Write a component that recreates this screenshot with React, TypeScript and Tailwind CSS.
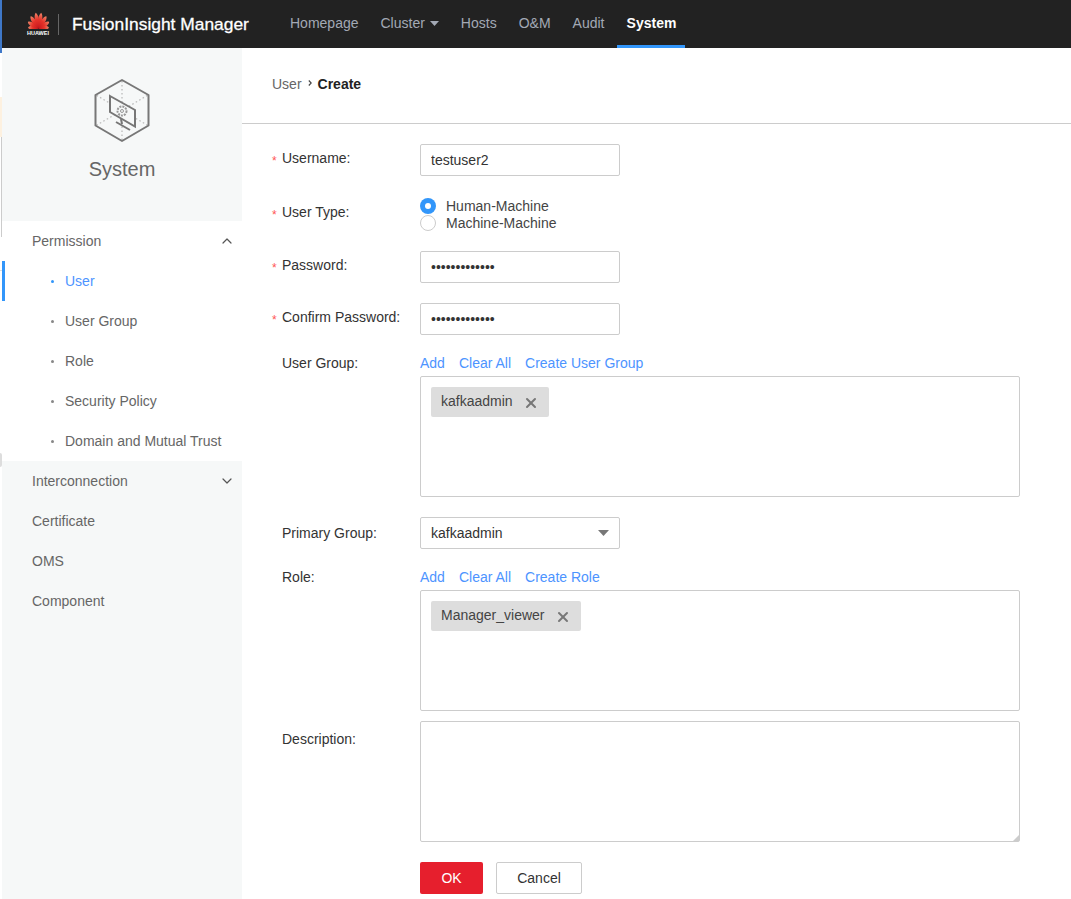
import React from "react";
import { ChevronDown, ChevronUp, X } from "lucide-react";

const navItems = ["Homepage", "Cluster", "Hosts", "O&M", "Audit"];
const menuItems = ["User", "User Group", "Role", "Security Policy", "Domain and Mutual Trust"];

// angle and length of each logo petal, left to right
const petals = [
  [-84, 10.5],
  [-58, 12.5],
  [-33, 14.5],
  [-10, 16],
  [10, 16],
  [33, 14.5],
  [58, 12.5],
  [84, 10.5],
];

function HuaweiLogo() {
  return (
    <div className="flex w-[24px] flex-col items-center">
      <svg width="23" height="17" viewBox="0 0 23 17">
        <defs>
          <linearGradient id="petal" x1="0" y1="0" x2="0" y2="1">
            <stop offset="0" stopColor="#f0876a" />
            <stop offset="0.45" stopColor="#e5332a" />
            <stop offset="1" stopColor="#c4161c" />
          </linearGradient>
        </defs>
        {petals.map(([a, l]) => (
          <path
            key={a}
            d={`M11.5 16.5 C8.6 ${16.5 - l * 0.45} 9 ${16.5 - l * 0.85} 11.5 ${16.5 - l} C14 ${16.5 - l * 0.85} 14.4 ${16.5 - l * 0.45} 11.5 16.5 Z`}
            fill="url(#petal)"
            transform={`rotate(${a} 11.5 16.5)`}
          />
        ))}
      </svg>
      <span className="mt-[1px] text-[5.5px] leading-[7px] font-bold text-white">HUAWEI</span>
    </div>
  );
}

function SystemIcon() {
  return (
    <svg width="58" height="66" viewBox="0 0 58 66" fill="none" className="ml-[2px]">
      <path d="M28 32.5 L28 2 M28 32.5 L2 17 M28 32.5 L54 17 M28 32.5 L2 47.5 M28 32.5 L54 47.5 M28 32.5 L28 63" stroke="#bbb" strokeWidth="1.3" strokeDasharray="1.6 2.4" />
      <path d="M28 2 L54.5 17 L54.5 47.5 L28 63 L1.5 47.5 L1.5 17 Z" stroke="#777" strokeWidth="2" strokeLinejoin="round" />
      <path d="M16 18 L41 32 L41 48.5 L16 34 Z" fill="#f6f8f8" stroke="#777" strokeWidth="2" />
      <circle cx="28" cy="33" r="4.5" stroke="#999" strokeWidth="2" strokeDasharray="2 1" />
      <circle cx="28" cy="33" r="1.5" stroke="#999" strokeWidth="1" />
      <path d="M27 41 L28 46 M22 44 L36 52" stroke="#777" strokeWidth="2" />
    </svg>
  );
}

function FormLabel({ text, required, pad }: { text: string; required?: boolean; pad: string }) {
  return (
    <div className={`flex w-[148px] shrink-0 leading-5 text-[#333] ${pad}`}>
      <span className="w-[10px] translate-y-[3px] text-[12px] text-[#f55]">{required ? "*" : ""}</span>
      <span>{text}</span>
    </div>
  );
}

function TextInput({ value, type = "text" }: { value: string; type?: string }) {
  return (
    <input
      type={type}
      value={value}
      readOnly
      className="h-8 w-[200px] rounded-[2px] border border-[#ccc] bg-white px-[10px] text-[#333] outline-none"
    />
  );
}

function Tag({ text }: { text: string }) {
  return (
    <div className="flex h-[30px] items-center rounded-[2px] bg-[#ddd] pr-[10px] pl-[10px] text-[#444]">
      <span className="-translate-y-[1px]">{text}</span>
      <X size={16} strokeWidth={3} className="mt-[1px] ml-[10px] text-[#777]" />
    </div>
  );
}

function TagBox({ tag }: { tag: string }) {
  return (
    <div className="flex h-[121px] w-[600px] items-start rounded-[2px] border border-[#ccc] bg-white pt-[10px] pl-[10px]">
      <Tag text={tag} />
    </div>
  );
}

function LinkRow({ items }: { items: string[] }) {
  return (
    <div className="flex h-[23px] gap-[14px] leading-5 text-[#4d94ff]">
      {items.map((item) => (
        <span key={item}>{item}</span>
      ))}
    </div>
  );
}

function MenuRow({ text, open }: { text: string; open?: boolean }) {
  return (
    <div className="flex h-10 items-center justify-between pr-[7px] pl-[30px] text-[#666]">
      <span>{text}</span>
      {open === true && <ChevronUp size={16} strokeWidth={1.8} className="text-[#555]" />}
      {open === false && <ChevronDown size={16} strokeWidth={1.8} className="text-[#555]" />}
    </div>
  );
}

export default function App() {
  return (
    <div className="flex h-[899px] w-[1071px] overflow-hidden bg-white font-['Liberation_Sans',Arial,sans-serif] text-[14px]">
      {/* stray pixels along the window edge */}
      <div className="flex w-[2px] shrink-0 flex-col">
        <div className="h-[53px] bg-[#3f78c8]" />
        <div className="h-[44px]" />
        <div className="h-[40px] bg-[#fdf1e0]" />
        <div className="ml-[1px] h-[100px] bg-[#ccc]" />
        <div className="h-[33px]" />
        <div className="h-[1px] bg-[#ddd]" />
        <div className="h-[182px]" />
        <div className="h-[14px] rounded-r-[2px] bg-[#ddd]" />
      </div>

      <div className="flex min-w-0 flex-1 flex-col">
        <header className="flex h-12 shrink-0 items-center bg-[#222] pl-[24px]">
          <HuaweiLogo />
          <div className="ml-[8px] h-[21px] w-[1px] bg-[#666]" />
          <div className="ml-[13px] w-[208px] text-[17.4px] text-white [-webkit-text-stroke:0.3px_white]">
            FusionInsight Manager
          </div>
          <nav className="flex h-12 gap-[2px] pb-[1px] text-[#a3a9b5]">
            {navItems.map((item) => (
              <div key={item} className="flex items-center px-[10px]">
                {item}
                {item === "Cluster" && (
                  <svg width="9" height="5" viewBox="0 0 9 5" className="ml-[5px]">
                    <path d="M0 0 H9 L4.5 5 Z" fill="#a3a9b5" />
                  </svg>
                )}
              </div>
            ))}
            <div className="-mb-[1px] ml-[1px] flex w-[68px] items-center justify-center border-b-[3px] border-[#3296fa] pt-[2px] font-bold text-white">
              System
            </div>
          </nav>
        </header>

        <div className="flex min-h-0 flex-1">
          <aside className="flex w-[240px] shrink-0 flex-col bg-[#f6f8f8]">
            <div className="flex h-[173px] flex-col items-center pt-[30px]">
              <SystemIcon />
              <div className="mt-[13px] text-[20px] leading-6 text-[#666]">System</div>
            </div>
            <div className="bg-white">
              <MenuRow text="Permission" open />
              {menuItems.map((item, i) => (
                <div
                  key={item}
                  className={`flex h-10 items-center border-l-[3px] pl-[46px] ${
                    i === 0 ? "border-[#3296fa] text-[#4d94ff]" : "border-transparent text-[#666]"
                  }`}
                >
                  <span className={`mr-[11px] h-[3px] w-[3px] rounded-full ${i === 0 ? "bg-[#3296fa]" : "bg-[#888]"}`} />
                  {item}
                </div>
              ))}
            </div>
            <MenuRow text="Interconnection" open={false} />
            <MenuRow text="Certificate" />
            <MenuRow text="OMS" />
            <MenuRow text="Component" />
          </aside>

          <main className="min-w-0 flex-1">
            <div className="flex h-[76px] items-center border-b border-[#ccc] pb-[3px] pl-[30px]">
              <span className="text-[#666]">User</span>
              <svg width="4" height="6" viewBox="0 0 4 6" fill="none" className="mx-[6px] -translate-y-[1px]">
                <path d="M0.8 0.5 L3.2 3 L0.8 5.5" stroke="#444" strokeWidth="1.1" />
              </svg>
              <span className="font-bold text-[#222]">Create</span>
            </div>

            <form className="pl-[30px]">
              <div className="mt-5 flex">
                <FormLabel text="Username:" required pad="pt-1" />
                <TextInput value="testuser2" />
              </div>

              <div className="mt-[21px] flex">
                <FormLabel text="User Type:" required pad="pt-[5px]" />
                <div className="leading-[17px] text-[#444]">
                  <div className="flex h-[17px] items-center">
                    <span className="mr-[10px] flex h-4 w-4 items-center justify-center rounded-full bg-[#3296fa]">
                      <span className="h-[6px] w-[6px] rounded-full bg-white" />
                    </span>
                    <span className="translate-y-[1px]">Human-Machine</span>
                  </div>
                  <div className="flex h-[17px] items-center">
                    <span className="mr-[10px] h-4 w-4 rounded-full border border-[#ccc] bg-white" />
                    <span className="translate-y-[1px]">Machine-Machine</span>
                  </div>
                </div>
              </div>

              <div className="mt-5 flex">
                <FormLabel text="Password:" required pad="pt-1" />
                <TextInput value="testuser2pass" type="password" />
              </div>

              <div className="mt-5 flex">
                <FormLabel text="Confirm Password:" required pad="pt-1" />
                <TextInput value="testuser2pass" type="password" />
              </div>

              <div className="mt-[18px] flex">
                <FormLabel text="User Group:" pad="" />
                <div>
                  <LinkRow items={["Add", "Clear All", "Create User Group"]} />
                  <TagBox tag="kafkaadmin" />
                </div>
              </div>

              <div className="mt-5 flex">
                <FormLabel text="Primary Group:" pad="pt-[6px]" />
                <div className="flex h-8 w-[200px] items-center justify-between rounded-[2px] border border-[#ccc] bg-white pr-[10px] pl-[10px] text-[#333]">
                  kafkaadmin
                  <svg width="11" height="6" viewBox="0 0 11 6">
                    <path d="M0 0 H11 L5.5 6 Z" fill="#777" />
                  </svg>
                </div>
              </div>

              <div className="mt-[18px] flex">
                <FormLabel text="Role:" pad="" />
                <div>
                  <LinkRow items={["Add", "Clear All", "Create Role"]} />
                  <TagBox tag="Manager_viewer" />
                </div>
              </div>

              <div className="mt-[10px] flex">
                <FormLabel text="Description:" pad="pt-2" />
                <div className="relative">
                  <textarea
                    readOnly
                    className="block h-[121px] w-[600px] resize-none rounded-[2px] border border-[#ccc] bg-white outline-none"
                  />
                  {/* resize grip */}
                  <svg width="6" height="6" viewBox="0 0 6 6" className="absolute right-[1px] bottom-[1px]">
                    <path d="M6 0 V6 H0 Z" fill="#ccc" />
                  </svg>
                </div>
              </div>

              <div className="mt-5 flex pl-[148px]">
                <button type="button" className="h-8 w-[63px] rounded-[2px] bg-[#e61f2d] text-white">
                  OK
                </button>
                <button type="button" className="ml-[13px] h-8 w-[86px] rounded-[2px] border border-[#ccc] bg-white text-[#333]">
                  Cancel
                </button>
              </div>
            </form>
          </main>
        </div>
      </div>
    </div>
  );
}
